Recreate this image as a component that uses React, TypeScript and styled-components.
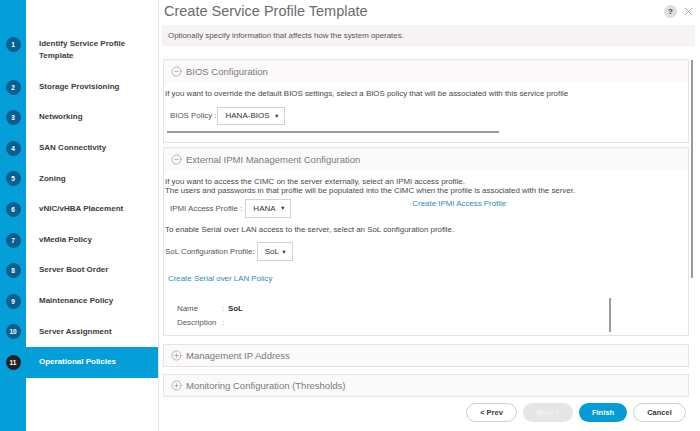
import React from "react";
import styled, { createGlobalStyle } from "styled-components";
import { CircleMinus, CirclePlus, X } from "lucide-react";

const GlobalStyle = createGlobalStyle`
  html, body {
    margin: 0;
    padding: 0;
    background: #fff;
  }
  body {
    font-family: "Liberation Sans", Arial, sans-serif;
  }
`;

const steps = [
  ["Identify Service Profile", "Template"],
  ["Storage Provisioning"],
  ["Networking"],
  ["SAN Connectivity"],
  ["Zoning"],
  ["vNIC/vHBA Placement"],
  ["vMedia Policy"],
  ["Server Boot Order"],
  ["Maintenance Policy"],
  ["Server Assignment"],
  ["Operational Policies"],
];

const ACTIVE = 10;

const App: React.FC = () => {
  return (
    <>
      <GlobalStyle />
      <Frame>
        <Sidebar>
          {steps.map((lines, i) => (
            <Step key={i}>
              <StepNum>
                <Dot $active={i === ACTIVE}>{i + 1}</Dot>
              </StepNum>
              <StepLabel $active={i === ACTIVE}>
                {lines.map((l) => (
                  <div key={l}>{l}</div>
                ))}
              </StepLabel>
            </Step>
          ))}
        </Sidebar>

        <Main>
          <TitleBar>
            <Title>Create Service Profile Template</Title>
            <Help>?</Help>
            <X size={13} strokeWidth={1.1} color="#6f6f6f" />
          </TitleBar>
          <InfoBar>Optionally specify information that affects how the system operates.</InfoBar>

          <ScrollArea>
            <Section>
              <SectionHeader>
                <CircleMinus size={11} strokeWidth={1.3} color="#8a8a8a" />
                BIOS Configuration
              </SectionHeader>
              <SectionBody $top={6}>
                <Text>
                  If you want to override the default BIOS settings, select a BIOS policy that will be associated
                  with this service profile
                </Text>
                <FieldRow $top={8} $left={5} $gap={1}>
                  <Label>BIOS Policy :</Label>
                  <Select $w={68} $h={18}>
                    HANA-BIOS <Caret>▼</Caret>
                  </Select>
                </FieldRow>
                <HScroll />
              </SectionBody>
            </Section>

            <Section $gap={8}>
              <SectionHeader>
                <CircleMinus size={11} strokeWidth={1.3} color="#8a8a8a" />
                External IPMI Management Configuration
              </SectionHeader>
              <SectionBody $top={6} $bottom={7}>
                <Text>
                  If you want to access the CIMC on the server externally, select an IPMI access profile.
                  <br />
                  The users and passwords in that profile will be populated into the CIMC when the profile is
                  associated with the server.
                </Text>
                <FieldRow $top={3} $left={5} $gap={3}>
                  <Label>IPMI Access Profile :</Label>
                  <Select $w={46} $h={19}>
                    HANA <Caret>▼</Caret>
                  </Select>
                  <Link $inline>Create IPMI Access Profile</Link>
                </FieldRow>
                <Text $top={7}>To enable Serial over LAN access to the server, select an SoL configuration profile.</Text>
                <FieldRow $top={8} $left={0} $gap={2}>
                  <Label>SoL Configuration Profile:</Label>
                  <Select $w={36} $h={19}>
                    SoL <Caret>▼</Caret>
                  </Select>
                </FieldRow>
                <Link $top={13}>Create Serial over LAN Policy</Link>
                <Props>
                  <PropKey>Name</PropKey>
                  <PropColon>:</PropColon>
                  <PropValue>SoL</PropValue>
                  <PropKey>Description</PropKey>
                  <PropColon>:</PropColon>
                  <PropValue />
                </Props>
              </SectionBody>
              <InnerThumb />
            </Section>

            <Section $gap={7}>
              <SectionHeader $h={21}>
                <CirclePlus size={11} strokeWidth={1.3} color="#8a8a8a" />
                Management IP Address
              </SectionHeader>
            </Section>

            <Section>
              <SectionHeader $h={21}>
                <CirclePlus size={11} strokeWidth={1.3} color="#8a8a8a" />
                Monitoring Configuration (Thresholds)
              </SectionHeader>
            </Section>

            <VThumb />
          </ScrollArea>

          <Footer>
            <Button $w={51} $kind="plain">&lt; Prev</Button>
            <Button $w={50} $kind="disabled">Next &gt;</Button>
            <Button $w={48} $kind="primary">Finish</Button>
            <Button $w={53} $kind="plain">Cancel</Button>
          </Footer>
        </Main>
      </Frame>
    </>
  );
};

export default App;

const Frame = styled.div`
  display: flex;
  width: 700px;
  height: 431px;
  overflow: hidden;
`;

const Sidebar = styled.nav`
  width: 159px;
  flex-shrink: 0;
  box-sizing: border-box;
  padding-top: 29px;
  background: linear-gradient(to right, #049fd9 26px, #fff 26px);
  border-right: 1px solid #e4e4e4;
`;

const Step = styled.div`
  display: flex;
  align-items: stretch;
`;

const StepNum = styled.div`
  width: 26px;
  flex-shrink: 0;
  display: flex;
  justify-content: center;
  align-items: flex-start;
  padding-top: 8px;
  box-sizing: border-box;
`;

const Dot = styled.span<{ $active?: boolean }>`
  width: 15px;
  height: 15px;
  border-radius: 50%;
  background: ${(p) => (p.$active ? "#232323" : "#0b5f8e")};
  color: #fff;
  font-size: 6.5px;
  font-weight: bold;
  display: flex;
  align-items: center;
  justify-content: center;
`;

const StepLabel = styled.div<{ $active?: boolean }>`
  flex: 1;
  padding: 9.3px 0 9.3px 13px;
  line-height: 12px;
  font-size: 8px;
  font-weight: bold;
  color: ${(p) => (p.$active ? "#fff" : "#3b3b3e")};
  background: ${(p) => (p.$active ? "#049fd9" : "transparent")};
`;

const Main = styled.main`
  flex: 1;
  min-width: 0;
  display: flex;
  flex-direction: column;
`;

const TitleBar = styled.header`
  height: 25px;
  display: flex;
  align-items: center;
  gap: 5px;
  padding: 0 5px 3px 5px;
  box-sizing: border-box;
`;

const Title = styled.h1`
  flex: 1;
  margin: 0;
  font-size: 14.5px;
  font-weight: normal;
  color: #6a6a6d;
`;

const Help = styled.span`
  width: 13px;
  height: 13px;
  border-radius: 50%;
  background: #dedede;
  color: #333;
  font-size: 8px;
  font-weight: bold;
  display: flex;
  align-items: center;
  justify-content: center;
`;

const InfoBar = styled.div`
  height: 21px;
  margin: 0 5px 0 3px;
  padding-left: 6px;
  display: flex;
  align-items: center;
  background: #f7f3f4;
  font-size: 7.9px;
  color: #555;
`;

const ScrollArea = styled.div`
  flex: 1;
  position: relative;
  overflow: hidden;
  padding: 13px 11px 0 4px;
`;

const Section = styled.section<{ $gap?: number }>`
  position: relative;
  border: 1px solid #e4e4e4;
  background: #fff;
  margin-bottom: ${(p) => p.$gap ?? 4}px;
`;

const SectionHeader = styled.div<{ $h?: number }>`
  height: ${(p) => p.$h ?? 23}px;
  display: flex;
  align-items: center;
  gap: 4px;
  padding-left: 7px;
  background: #fcf9fa;
  font-size: 9.5px;
  color: #7a7a7a;
`;

const SectionBody = styled.div<{ $top: number; $bottom?: number }>`
  padding: ${(p) => p.$top}px 0 ${(p) => p.$bottom ?? 9}px 1px;
`;

const Text = styled.div<{ $top?: number }>`
  margin-top: ${(p) => p.$top ?? 0}px;
  font-size: 7.9px;
  line-height: 9.5px;
  color: #474747;
`;

const FieldRow = styled.div<{ $top: number; $left: number; $gap: number }>`
  display: flex;
  align-items: center;
  gap: ${(p) => p.$gap}px;
  margin-top: ${(p) => p.$top}px;
  padding-left: ${(p) => p.$left}px;
`;

const Label = styled.span`
  font-size: 7.9px;
  color: #555;
`;

const Select = styled.div<{ $w: number; $h: number }>`
  width: ${(p) => p.$w}px;
  height: ${(p) => p.$h}px;
  box-sizing: border-box;
  border: 1px solid #d2d2d2;
  background: #fff;
  display: flex;
  align-items: center;
  justify-content: space-between;
  padding: 0 5px 0 7px;
  font-size: 8px;
  color: #333;
`;

const Caret = styled.span`
  font-size: 5.5px;
  color: #333;
`;

const Link = styled.div<{ $inline?: boolean; $top?: number }>`
  font-size: 7.9px;
  line-height: 10px;
  color: #2f8bb6;
  margin-top: ${(p) => p.$top ?? 0}px;
  padding-left: ${(p) => (p.$inline ? 0 : 3)}px;
  margin-left: ${(p) => (p.$inline ? "118px" : "0")};
  align-self: ${(p) => (p.$inline ? "flex-start" : "auto")};
`;

const HScroll = styled.div`
  width: 332px;
  height: 2px;
  margin: 6px 0 0 2px;
  background: #9b9b9b;
`;

const Props = styled.div`
  display: grid;
  grid-template-columns: 45px 6px auto;
  row-gap: 4px;
  margin: 20px 0 0 12px;
  font-size: 7.9px;
  line-height: 10px;
  color: #555;
`;

const PropKey = styled.span``;
const PropColon = styled.span`
  color: #999;
`;
const PropValue = styled.span`
  font-weight: bold;
  color: #333;
  min-height: 10px;
`;

const InnerThumb = styled.div`
  position: absolute;
  left: 445px;
  top: 150px;
  width: 2px;
  height: 34px;
  background: #9b9b9b;
`;

const VThumb = styled.div`
  position: absolute;
  right: 7px;
  top: 14px;
  width: 2.5px;
  height: 218px;
  background: #9a9a9a;
`;

const Footer = styled.footer`
  height: 34px;
  flex-shrink: 0;
  display: flex;
  justify-content: flex-end;
  align-items: flex-start;
  gap: 6px;
  padding: 6px 14px 0 0;
  box-sizing: border-box;
`;

const Button = styled.button<{ $w: number; $kind: "plain" | "disabled" | "primary" }>`
  width: ${(p) => p.$w}px;
  height: 19px;
  padding: 0;
  border-radius: 10px;
  font-family: "Liberation Sans", Arial, sans-serif;
  font-size: 7.5px;
  font-weight: bold;
  border: ${(p) => (p.$kind === "plain" ? "1px solid #cfcfcf" : "none")};
  background: ${(p) => (p.$kind === "primary" ? "#079bd6" : p.$kind === "disabled" ? "#e6e6e6" : "#fff")};
  color: ${(p) => (p.$kind === "primary" ? "#fff" : p.$kind === "disabled" ? "#f4f4f4" : "#3a3a3a")};
`;
